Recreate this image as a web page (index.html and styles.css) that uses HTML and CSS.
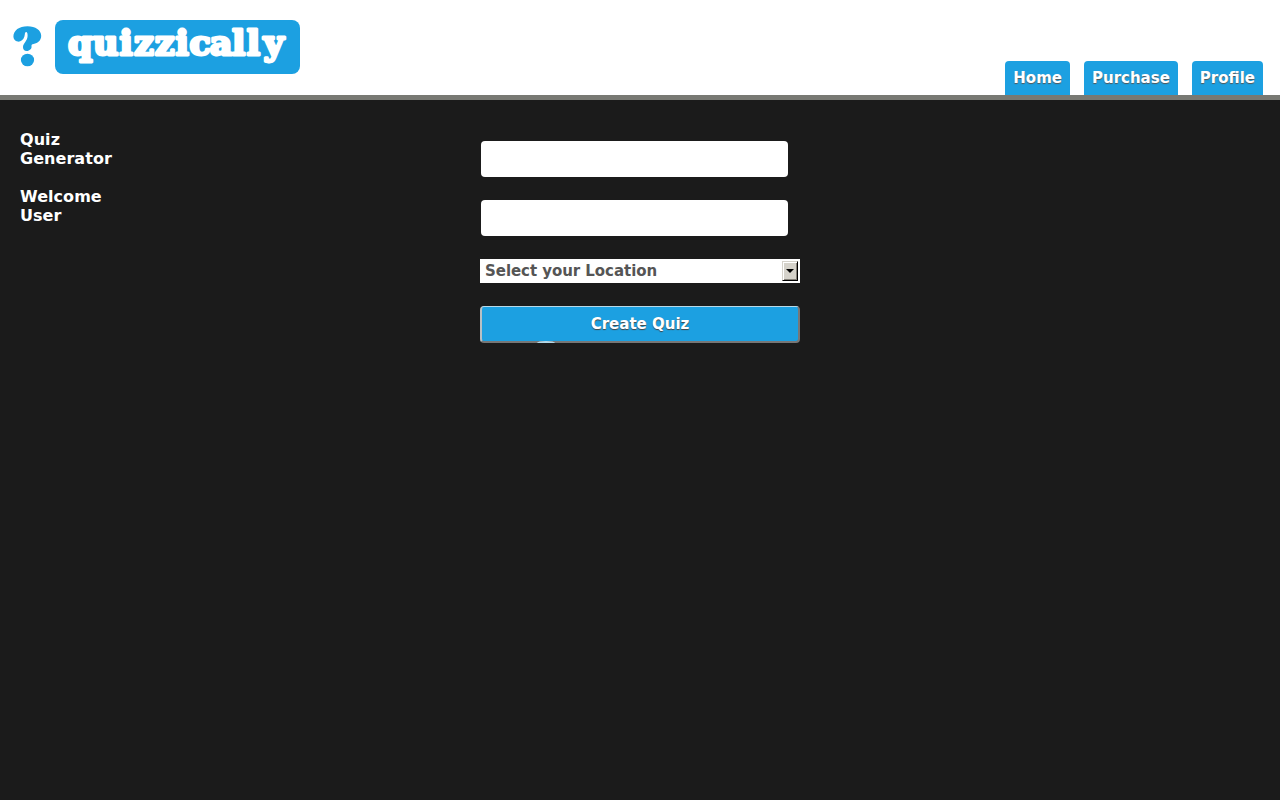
FILE: index.html
```html
<!DOCTYPE html>
<html lang="en">
<head>
<meta charset="utf-8">
<title>Quizzically</title>
<link rel="stylesheet" href="styles.css">
</head>
<body>
<header class="header">
  <a class="brand" href="#">
    <svg class="brand-mark" width="29" height="42" viewBox="0 0 29 42" aria-hidden="true">
      <path d="M14.8 24.9C12 25.6 10 23.8 10 21.2C10 17.6 14.6 14.8 14.6 9.8C14.6 7 14.2 5.9 13 6C11.7 6.1 12.1 8 11.4 10.5C10.4 13.9 7.6 15.9 4.8 15.6C2 15.3 .4 13.2 .4 10.6C.4 4.4 6 .2 14.5 .2C22.5 .2 28.2 4 28.2 9.8C28.2 14.4 25 17.1 20.5 18C17.5 18.6 18.9 20.1 18.5 21.6C18.1 23.3 16.8 24.4 14.8 24.9Z"/>
      <ellipse cx="14.5" cy="34" rx="6.6" ry="6.3"/>
    </svg>
    <svg class="brand-name" width="245" height="54" viewBox="0 0 245 54">
      <rect width="245" height="54" rx="8"/>
      <text transform="translate(0 35.2) scale(1.06 1)" x="12.2 35.8 60.8 74.6 94 113.6 126.8 146 167 180.9 196.8" y="0">quizzically</text>
    </svg>
  </a>
  <nav class="nav">
    <a href="#">Home</a>
    <a href="#">Purchase</a>
    <a href="#">Profile</a>
  </nav>
</header>
<main class="main">
  <aside class="sidebar">
    <p>Quiz Generator</p>
    <p>Welcome User</p>
  </aside>
  <form class="form">
    <input class="field" type="text">
    <input class="field" type="text">
    <div class="select">
      <span>Select your Location</span>
      <span class="select-button"><svg width="8" height="4" viewBox="0 0 8 4"><path d="M0 0H8L4 4Z"/></svg></span>
    </div>
    <button class="submit" type="button">Create Quiz<span class="glint"></span></button>
  </form>
</main>
</body>
</html>
```
FILE: styles.css
```css
* { box-sizing: border-box; }
body {
  margin: 0;
  min-height: 100vh;
  background: #1b1b1b;
  color: #fff;
  font: bold 15px/18px "DejaVu Sans", sans-serif;
}
.header {
  display: flex;
  justify-content: space-between;
  height: 100px;
  padding: 0 17px 0 13px;
  background: #fff;
  border-bottom: 5px solid #787973;
}
.brand { display: flex; gap: 13px; padding-top: 20px; }
.brand-mark { margin-top: 6px; fill: #1ca0e1; }
.brand-name rect { fill: #1ca0e1; }
.brand-name text {
  fill: #fff;
  stroke: #fff;
  stroke-width: 2.8px;
  stroke-linejoin: round;
  font: bold 33px "DejaVu Serif", serif;
}
.nav { display: flex; align-items: flex-end; gap: 14px; }
.nav a {
  height: 34px;
  padding: 8px 8px;
  border-radius: 4px 4px 0 0;
  background: #1ca0e1;
  color: #fff;
  text-decoration: none;
  text-shadow: 0 1px 1px #555;
}
.main {
  display: grid;
  grid-template-columns: 120px 320px;
  column-gap: 340px;
  padding: 30px 20px 0;
}
.sidebar { font-size: 16px; line-height: 19px; letter-spacing: .05px; }
.sidebar p { width: 95px; margin: 0 0 19px; }
.form { display: flex; flex-direction: column; padding-top: 11px; }
.field {
  width: 307px;
  height: 36px;
  margin: 0 0 23px 1px;
  border: 0;
  border-radius: 4px;
  background: #fff;
}
.select {
  display: flex;
  align-items: center;
  justify-content: space-between;
  height: 24px;
  padding: 0 2px 1px 5px;
  background: #fff;
  color: #555;
  letter-spacing: -.05px;
}
.select-button {
  display: flex;
  align-items: center;
  justify-content: center;
  width: 16px;
  height: 20px;
  padding-right: 1px;
  background: #d5d2ca;
  border: 1px solid;
  border-color: #d5d2ca #000 #000 #d5d2ca;
  box-shadow: inset 1px 1px #fff, inset -1px -1px #848078;
}
.submit {
  position: relative;
  width: 320px;
  height: 37px;
  margin-top: 23px;
  padding: 0;
  border: 2px solid;
  border-width: 1px 2px 2px;
  border-color: #b9d9e8 #777 #777 #b8c0c4;
  border-radius: 4px;
  background: #1ca0e1;
  color: #fff;
  font: inherit;
  text-shadow: 0 1px 1px #444;
}
.glint {
  position: absolute;
  left: 55px;
  bottom: -2px;
  width: 18px;
  height: 2px;
  border-radius: 50% 50% 0 0 / 100% 100% 0 0;
  background: #b5d8e8;
}
```
